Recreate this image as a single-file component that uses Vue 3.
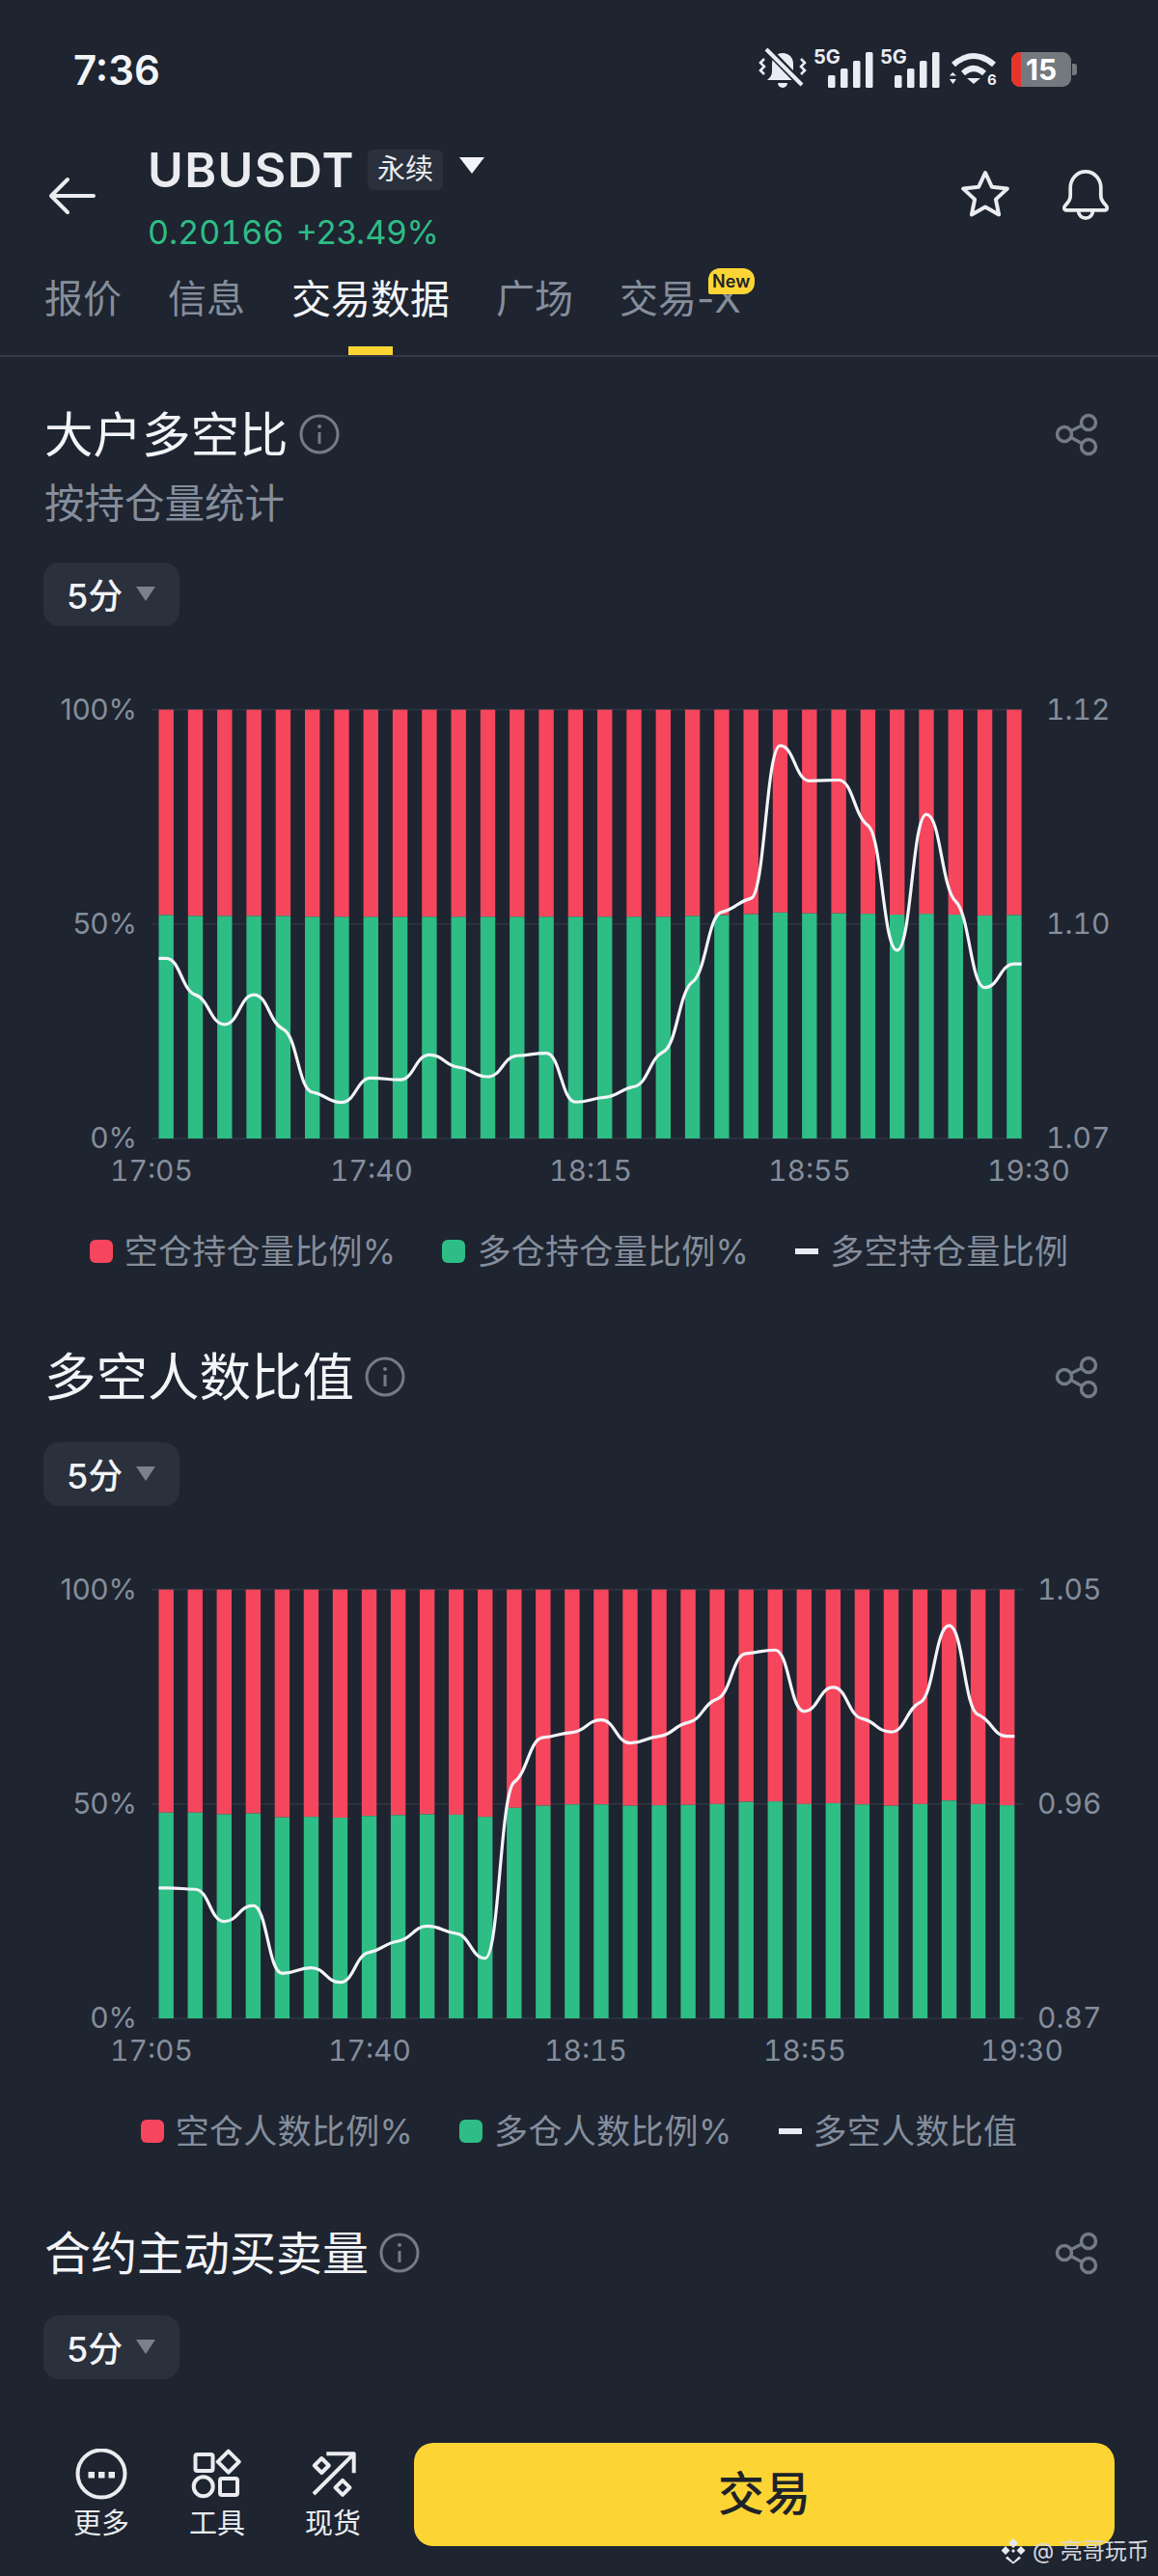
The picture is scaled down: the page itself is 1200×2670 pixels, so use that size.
<script setup>
const PLOT_TOP = 48.6;
const PLOT_BOTTOM = 493;
const PLOT_HEIGHT = PLOT_BOTTOM - PLOT_TOP;
const BAR_WIDTH = 15.4;
const BAR_LEFT = 164.5;

// 多仓占比(%)
const longTop = [
  52.1, 51.9, 51.9, 51.9, 51.9, 51.7, 51.7, 51.7, 51.7, 51.7, 51.7, 51.7, 51.7, 51.7, 51.7,
  51.7, 51.7, 51.7, 51.9, 52.1, 52.3, 52.7, 52.5, 52.5, 52.4, 52.2, 52.4, 52.2, 52.0, 52.1,
];
const longCount = [
  48.0, 48.0, 47.6, 47.8, 46.9, 47.0, 46.8, 47.2, 47.4, 47.6, 47.5, 47.0, 49.1, 49.6, 49.9,
  49.9, 49.6, 49.7, 49.8, 50.0, 50.5, 50.6, 50.0, 50.2, 49.9, 49.6, 50.0, 50.8, 50.0, 49.7,
];
// 折线位置(占绘图区高度的百分比)
const ratioTop = [
  42.0, 33.5, 26.6, 33.5, 25.5, 10.8, 8.4, 14.1, 13.7, 19.5, 16.6, 14.4, 19.3, 19.9, 8.5,
  9.6, 12.1, 20.2, 36.5, 52.8, 56.0, 91.6, 83.4, 83.6, 73.0, 43.9, 75.6, 55.3, 35.2, 40.7,
];
const ratioCount = [
  30.4, 30.1, 22.6, 26.3, 10.5, 11.8, 8.4, 15.4, 18.0, 21.5, 19.8, 14.0, 55.1, 65.5, 66.7,
  69.6, 64.2, 65.8, 69.0, 74.5, 85.1, 85.9, 71.6, 77.2, 69.9, 66.8, 73.7, 91.6, 70.8, 65.8,
];

const yOf = (pct) => PLOT_BOTTOM - (pct / 100) * PLOT_HEIGHT;

// 平滑折线，和 echarts 的 smooth 效果差不多
const buildLine = (values, pitch) => {
  const xs = values.map((_, i) => BAR_LEFT + BAR_WIDTH / 2 + i * pitch);
  const ys = values.map(yOf);
  const slope = ys.map((y, i) => {
    if (i === 0 || i === ys.length - 1) return 0;
    const a = y - ys[i - 1];
    const b = ys[i + 1] - y;
    if (a * b <= 0) return 0;
    return ((2 * a * b) / (a + b) / pitch) * 0.3;
  });
  let d = `M${BAR_LEFT} ${ys[0]} L${xs[0]} ${ys[0]}`;
  for (let i = 1; i < xs.length; i++) {
    const h = pitch * 0.48;
    d += ` C${xs[i - 1] + h} ${ys[i - 1] + slope[i - 1] * h} ${xs[i] - h} ${ys[i] - slope[i] * h} ${xs[i]} ${ys[i]}`;
  }
  return d + ` L${xs[xs.length - 1] + BAR_WIDTH / 2} ${ys[ys.length - 1]}`;
};

const buildBars = (values, pitch) =>
  values.map((pct, i) => ({
    x: BAR_LEFT + i * pitch,
    split: yOf(pct),
  }));

const PITCH_A = 30.3;
const PITCH_B = 30.05;

const charts = [
  {
    title: "大户多空比",
    titleClass: "title-a",
    sub: "按持仓量统计",
    bars: buildBars(longTop, PITCH_A),
    line: buildLine(ratioTop, PITCH_A),
    rightX: 1084,
    rightLabels: ["1.12", "1.10", "1.07"],
    times: [
      { x: 157, t: "17:05" },
      { x: 385, t: "17:40" },
      { x: 612, t: "18:15" },
      { x: 839, t: "18:55" },
      { x: 1066, t: "19:30" },
    ],
    legend: ["空仓持仓量比例%", "多仓持仓量比例%", "多空持仓量比例"],
  },
  {
    title: "多空人数比值",
    titleClass: "title-b",
    bars: buildBars(longCount, PITCH_B),
    line: buildLine(ratioCount, PITCH_B),
    rightX: 1075,
    rightLabels: ["1.05", "0.96", "0.87"],
    times: [
      { x: 157, t: "17:05" },
      { x: 383, t: "17:40" },
      { x: 607, t: "18:15" },
      { x: 834, t: "18:55" },
      { x: 1059, t: "19:30" },
    ],
    legend: ["空仓人数比例%", "多仓人数比例%", "多空人数比值"],
  },
];

const gridLines = [PLOT_TOP, (PLOT_TOP + PLOT_BOTTOM) / 2, PLOT_BOTTOM];
const leftLabels = ["100%", "50%", "0%"];
const tabs = ["报价", "信息", "交易数据", "广场", "交易-X"];
const signalBars = [
  { x: 15, y: 24, h: 13 },
  { x: 28, y: 17, h: 20 },
  { x: 41, y: 9, h: 28 },
  { x: 54, y: 0, h: 37 },
];
</script>

<template>
  <div class="page">
    <div class="status-bar">
      <span class="clock">7:36</span>
      <div class="status-icons">
        <svg class="ic-mute" width="50" height="44" viewBox="0 0 50 44">
          <path d="M25 5c-7 0-11 5-11 11v8c0 4-2 6-5 9h32c-3-3-5-5-5-9v-8c0-6-4-11-11-11z" fill="#e9ecf2" />
          <path d="M20 36h10a5 5 0 0 1-10 0z" fill="#e9ecf2" />
          <path d="M9 1l36 37" stroke="#1e2430" stroke-width="8" fill="none" />
          <path d="M8 1l37 37" stroke="#e9ecf2" stroke-width="4" fill="none" />
          <path d="M6 11L2 15l4 4-4 4 4 4M44 11l4 4-4 4 4 4-4 4" stroke="#e9ecf2" stroke-width="2.5" fill="none" />
        </svg>
        <svg v-for="n in 2" :key="n" class="ic-signal" width="62" height="40" viewBox="0 0 62 40">
          <text class="five-g" x="0" y="14">5G</text>
          <rect v-for="b in signalBars" :key="b.x" :x="b.x" :y="b.y + 2" width="7.5" :height="b.h" rx="1.5" fill="#e9ecf2" />
        </svg>
        <svg class="ic-wifi" width="52" height="36" viewBox="-2 0 52 36">
          <path d="M3 13Q24-5 45 13" stroke="#e9ecf2" stroke-width="6" fill="none" />
          <path d="M13 22q11-10 22 0" stroke="#e9ecf2" stroke-width="6" fill="none" />
          <path d="M17 27h14l-7 6zM2.300 21L-1 24.500h7zM-1 28h7l-3.500 5z" fill="#e9ecf2" />
          <text class="wifi-six" x="38" y="34">6</text>
        </svg>
        <svg class="ic-battery" width="70" height="36" viewBox="0 0 70 36">
          <rect width="62" height="36" rx="9" fill="#74797f" />
          <path d="M63 12h2a3 3 0 0 1 3 3v6a3 3 0 0 1-3 3h-2z" fill="#74797f" />
          <path d="M10 0H9a9 9 0 0 0-9 9v18a9 9 0 0 0 9 9h1z" fill="#e8352b" />
          <text class="battery-num" x="15" y="29">15</text>
        </svg>
      </div>
    </div>

    <header class="top-bar">
      <svg class="back" width="50" height="40" viewBox="0 0 50 40">
        <path d="M3 20h44M20 3L3 20l17 17" stroke="#eaecef" stroke-width="4" stroke-linecap="round" stroke-linejoin="round" fill="none" />
      </svg>
      <div class="ticker">
        <div class="ticker-row">
          <span class="symbol">UBUSDT</span>
          <span class="perp">永续</span>
          <span class="caret-white"></span>
        </div>
        <div class="price">
          <span class="price-last">0.20166</span>
          <span>+23.49%</span>
        </div>
      </div>
      <div class="top-actions">
        <svg width="56" height="56" viewBox="0 0 56 56">
          <path d="M28 4l6.800 14.700 16 1.900-11.900 11 3.200 15.800L28 39.500l-14.100 7.900 3.200-15.800-11.900-11 16-1.900z" stroke="#eaecef" stroke-width="4" stroke-linejoin="round" fill="none" />
        </svg>
        <svg width="52" height="56" viewBox="0 0 56 60">
          <path d="M11 21a17 18 0 0 1 34 0v9c0 5 3 8 6 11 2 2 1 5-2 5H7c-3 0-4-3-2-5 3-3 6-6 6-11z" stroke="#eaecef" stroke-width="4" stroke-linejoin="round" fill="none" />
          <path d="M20 47a8 8 0 0 0 16 0" stroke="#eaecef" stroke-width="4" fill="none" />
        </svg>
      </div>
    </header>

    <nav class="tabs">
      <div v-for="(tab, i) in tabs" :key="tab" class="tab" :class="{ active: i === 2 }">
        {{ tab }}
        <span v-if="i === 2" class="tab-mark"></span>
        <span v-if="i === 4" class="new-badge">New</span>
      </div>
    </nav>

    <main class="content">
      <section v-for="chart in charts" :key="chart.title" class="block">
        <div class="block-head">
          <h2 class="block-title" :class="chart.titleClass">{{ chart.title }}</h2>
          <svg class="info" width="42" height="42" viewBox="0 0 42 42">
            <circle cx="21" cy="21" r="19" stroke="#747b88" stroke-width="3" fill="none" />
            <circle cx="21" cy="13" r="2" fill="#747b88" />
            <path d="M21 19v12" stroke="#747b88" stroke-width="3" fill="none" />
          </svg>
          <svg class="share" width="48" height="48" viewBox="0 0 48 48">
            <g stroke="#747b88" stroke-width="3.500" fill="none">
              <circle cx="11" cy="24" r="7.500" />
              <circle cx="36" cy="12" r="7.500" />
              <circle cx="36" cy="37" r="7.500" />
              <path d="M18 20.500l11-5.500M18 27.500l11 6" />
            </g>
          </svg>
        </div>
        <p v-if="chart.sub" class="block-sub">{{ chart.sub }}</p>
        <div class="period" :class="{ 'period-sub': chart.sub }">
          <span>5分</span>
          <i class="caret-grey"></i>
        </div>

        <svg class="chart" width="1200" height="550" viewBox="0 0 1200 550">
          <line v-for="y in gridLines" :key="y" x1="157" x2="1060" :y1="y" :y2="y" stroke="#2f3541" stroke-width="1.500" />
          <g v-for="(bar, i) in chart.bars" :key="i">
            <rect :x="bar.x" :y="PLOT_TOP" :width="BAR_WIDTH" :height="bar.split - PLOT_TOP" fill="#f6465d" />
            <rect :x="bar.x" :y="bar.split" :width="BAR_WIDTH" :height="PLOT_BOTTOM - bar.split" fill="#2ebd85" />
          </g>
          <path :d="chart.line" stroke="#f2f4f7" stroke-width="3.2" fill="none" stroke-linejoin="round" />
          <text v-for="(label, i) in leftLabels" :key="label" class="axis axis-end" x="142" :y="gridLines[i] + 10">{{ label }}</text>
          <text v-for="(label, i) in chart.rightLabels" :key="label" class="axis axis-num" :x="chart.rightX" :y="gridLines[i] + 10">{{ label }}</text>
          <text v-for="item in chart.times" :key="item.t" class="axis axis-num axis-mid" :x="item.x" y="537">{{ item.t }}</text>
        </svg>

        <div class="legend">
          <div class="legend-item">
            <i class="swatch swatch-red"></i><span>{{ chart.legend[0] }}</span>
          </div>
          <div class="legend-item">
            <i class="swatch swatch-green"></i><span>{{ chart.legend[1] }}</span>
          </div>
          <div class="legend-item">
            <i class="dash"></i><span>{{ chart.legend[2] }}</span>
          </div>
        </div>
      </section>

      <section class="block block-last">
        <div class="block-head">
          <h2 class="block-title title-c">合约主动买卖量</h2>
          <svg class="info" width="42" height="42" viewBox="0 0 42 42">
            <circle cx="21" cy="21" r="19" stroke="#747b88" stroke-width="3" fill="none" />
            <circle cx="21" cy="13" r="2" fill="#747b88" />
            <path d="M21 19v12" stroke="#747b88" stroke-width="3" fill="none" />
          </svg>
          <svg class="share" width="48" height="48" viewBox="0 0 48 48">
            <g stroke="#747b88" stroke-width="3.500" fill="none">
              <circle cx="11" cy="24" r="7.500" />
              <circle cx="36" cy="12" r="7.500" />
              <circle cx="36" cy="37" r="7.500" />
              <path d="M18 20.500l11-5.500M18 27.500l11 6" />
            </g>
          </svg>
        </div>
        <div class="period">
          <span>5分</span>
          <i class="caret-grey"></i>
        </div>
      </section>
    </main>

    <footer class="footer">
      <div class="foot-item">
        <svg width="56" height="56" viewBox="0 0 56 56">
          <circle cx="28" cy="26" r="24.500" stroke="#eaecef" stroke-width="4" fill="none" />
          <path d="M14.500 24h6.500v6.500h-6.500zM25 24h6.500v6.500H25zM35.500 24H42v6.500h-6.500z" fill="#eaecef" />
        </svg>
        <span>更多</span>
      </div>
      <div class="foot-item">
        <svg width="56" height="56" viewBox="0 0 56 56">
          <g stroke="#eaecef" stroke-width="4" fill="none" stroke-linejoin="round">
            <rect x="5.500" y="6" width="18" height="17" rx="2" />
            <path d="M39.700 2.700l11 11-11 11-11-11z" />
            <circle cx="13.700" cy="39.300" r="10" />
            <rect x="31" y="31" width="18" height="17" rx="2" />
          </g>
        </svg>
        <span>工具</span>
      </div>
      <div class="foot-item">
        <svg width="56" height="56" viewBox="0 0 56 56">
          <g stroke="#eaecef" stroke-width="4" fill="none" stroke-linejoin="round">
            <path d="M8 47L49.700 5.300M21.300 5.300h28.400v20" />
            <path d="M16.300 10l7.500 7.500-7.500 7.500-7.500-7.500zM38 32.800l7.500 7.500-7.500 7.500-7.500-7.500z" />
          </g>
        </svg>
        <span>现货</span>
      </div>
      <button class="trade">交易</button>
    </footer>

    <div class="watermark">
      <svg width="28" height="28" viewBox="0 0 28 28">
        <path d="M14 1l5 5-5 5-5-5zM6 9l4.500 4.500L6 18l-4.500-4.500zM22 9l4.500 4.500L22 18l-4.500-4.500zM14 12l2 2-2 2-2-2zM8 19.500l6 6 6-6 2 2-8 6-8-6z" fill="#e6e8ee" />
      </svg>
      <span>@ 亮哥玩币</span>
    </div>
  </div>
</template>

<style>
html,
body {
  margin: 0;
  background: #1e2430;
}
</style>

<style scoped>
.page {
  position: relative;
  display: flex;
  flex-direction: column;
  width: 1200px;
  height: 2670px;
  overflow: hidden;
  background: #1e2430;
  color: #eaecef;
  font-family: Inter, "Noto Sans CJK SC", sans-serif;
}

.status-bar {
  display: flex;
  align-items: center;
  justify-content: space-between;
  height: 144px;
  padding: 0 82px 0 76px;
  box-sizing: border-box;
}
.clock {
  font-size: 42px;
  font-weight: 600;
  color: #f2f4f7;
}
.status-icons {
  display: flex;
  align-items: center;
  gap: 7px;
}
.status-icons svg {
  overflow: visible;
}
.ic-wifi {
  margin: 0 6px 0 2px;
}
.five-g {
  font-size: 20px;
  font-weight: 700;
  fill: #e9ecf2;
}
.wifi-six {
  font-size: 15px;
  font-weight: 700;
  fill: #e9ecf2;
}
.battery-num {
  font-size: 30px;
  font-weight: 700;
  fill: #ffffff;
}

.top-bar {
  display: flex;
  align-items: center;
  height: 118px;
  padding: 0 49px 0 50px;
  box-sizing: border-box;
}
.back {
  flex: none;
}
.ticker {
  display: flex;
  flex-direction: column;
  gap: 17px;
  margin-left: 53px;
  margin-top: 6px;
}
.ticker-row {
  display: flex;
  align-items: center;
  height: 52px;
}
.symbol {
  font-size: 50px;
  font-weight: 600;
  letter-spacing: 1.4px;
  color: #eaecef;
}
.perp {
  margin-left: 13px;
  padding: 3px 10px;
  font-size: 29px;
  line-height: 36px;
  border-radius: 6px;
  background: #2a303c;
}
.caret-white {
  width: 0;
  height: 0;
  margin: -8px 0 0 17px;
  border-left: 13px solid transparent;
  border-right: 13px solid transparent;
  border-top: 17px solid #f2f4f7;
}
.price {
  display: flex;
  gap: 12px;
  font-size: 34px;
  line-height: 44px;
  color: #2ebd85;
}
.price-last {
  font-variant-numeric: tabular-nums;
}
.top-actions {
  display: flex;
  align-items: center;
  gap: 50px;
  margin-left: auto;
}

.tabs {
  display: flex;
  gap: 48px;
  height: 108px;
  padding: 26px 0 0 46px;
  box-sizing: border-box;
  border-bottom: 2px solid #333945;
}
.tab {
  position: relative;
  height: 80px;
  font-size: 40px;
  line-height: 44px;
  color: #848e9c;
}
.tab.active {
  font-size: 41px;
  color: #f2f4f7;
}
.tab-mark {
  position: absolute;
  left: 59px;
  bottom: 0;
  width: 46px;
  height: 9px;
  background: #fcd535;
}
.new-badge {
  position: absolute;
  top: -10px;
  right: -14px;
  width: 48px;
  height: 27px;
  border-radius: 12px 12px 12px 2px;
  background: #fcd535;
  color: #1e2329;
  font-size: 18px;
  font-weight: 600;
  line-height: 27px;
  text-align: center;
}

.content {
  flex: 1;
  min-height: 0;
  overflow: hidden;
}
.block-head {
  display: flex;
  align-items: center;
  height: 60px;
  padding: 0 60px 0 46px;
}
.block:first-child .block-head {
  margin-top: 48px;
}
.block + .block .block-head {
  margin-top: 76px;
}
.block.block-last .block-head {
  margin-top: 72px;
}
.block-title {
  margin: -3px 0 0;
  font-weight: 400;
  color: #f2f4f7;
}
.title-a {
  font-size: 50.5px;
}
.title-b {
  font-size: 53.5px;
}
.title-c {
  font-size: 48px;
}
.info {
  margin: 4px 0 0 11px;
}
.share {
  margin: 4px 0 0 auto;
}
.block-sub {
  margin: 22px 0 0 46px;
  font-size: 41.5px;
  line-height: 44px;
  color: #848e9c;
}
.period {
  display: flex;
  align-items: center;
  width: 141px;
  height: 66px;
  margin: 40px 0 0 45px;
  padding: 0 0 3px 24px;
  box-sizing: border-box;
  border-radius: 16px;
  background: #2a303c;
  font-size: 36px;
  font-weight: 500;
  color: #f2f4f7;
}
.period-sub {
  margin-top: 39px;
}
.block-last .period {
  margin-top: 37px;
}
.caret-grey {
  width: 0;
  height: 0;
  margin: 2px 0 0 14px;
  border-left: 10px solid transparent;
  border-right: 10px solid transparent;
  border-top: 15px solid #7a818d;
}
.chart {
  display: block;
  margin-top: 38px;
}
.axis {
  font-size: 30px;
  fill: #848e9c;
}
.axis-num {
  font-variant-numeric: tabular-nums;
}
.axis-end {
  text-anchor: end;
}
.axis-mid {
  text-anchor: middle;
}
.legend {
  display: flex;
  justify-content: center;
  gap: 48px;
  margin-top: 38px;
  height: 44px;
  font-size: 35px;
  line-height: 44px;
  letter-spacing: 0.3px;
  color: #848e9c;
}
.legend-item {
  display: flex;
  align-items: center;
  gap: 12px;
}
.swatch {
  width: 24px;
  height: 24px;
  border-radius: 6px;
}
.swatch-red {
  background: #f6465d;
}
.swatch-green {
  background: #2ebd85;
}
.dash {
  width: 24px;
  height: 6px;
  background: #e9ecf2;
}

.footer {
  display: flex;
  align-items: flex-start;
  flex: none;
  height: 150px;
  padding: 12px 45px 0;
  box-sizing: border-box;
}
.foot-item {
  display: flex;
  flex-direction: column;
  align-items: center;
  width: 120px;
  padding-top: 6px;
  font-size: 29px;
  line-height: 36px;
  color: #eaecef;
}
.foot-item span {
  margin-top: 4px;
}
.trade {
  width: 726px;
  height: 107px;
  margin-left: 24px;
  padding: 0 0 10px;
  border: none;
  border-radius: 20px;
  background: #fcd535;
  color: #1e2329;
  font-family: inherit;
  font-size: 48px;
  font-weight: 500;
}

.watermark {
  position: absolute;
  left: 1036px;
  top: 2630px;
  display: flex;
  align-items: center;
  gap: 6px;
  font-size: 23px;
  line-height: 28px;
  color: #d4d8de;
  white-space: nowrap;
}
</style>
